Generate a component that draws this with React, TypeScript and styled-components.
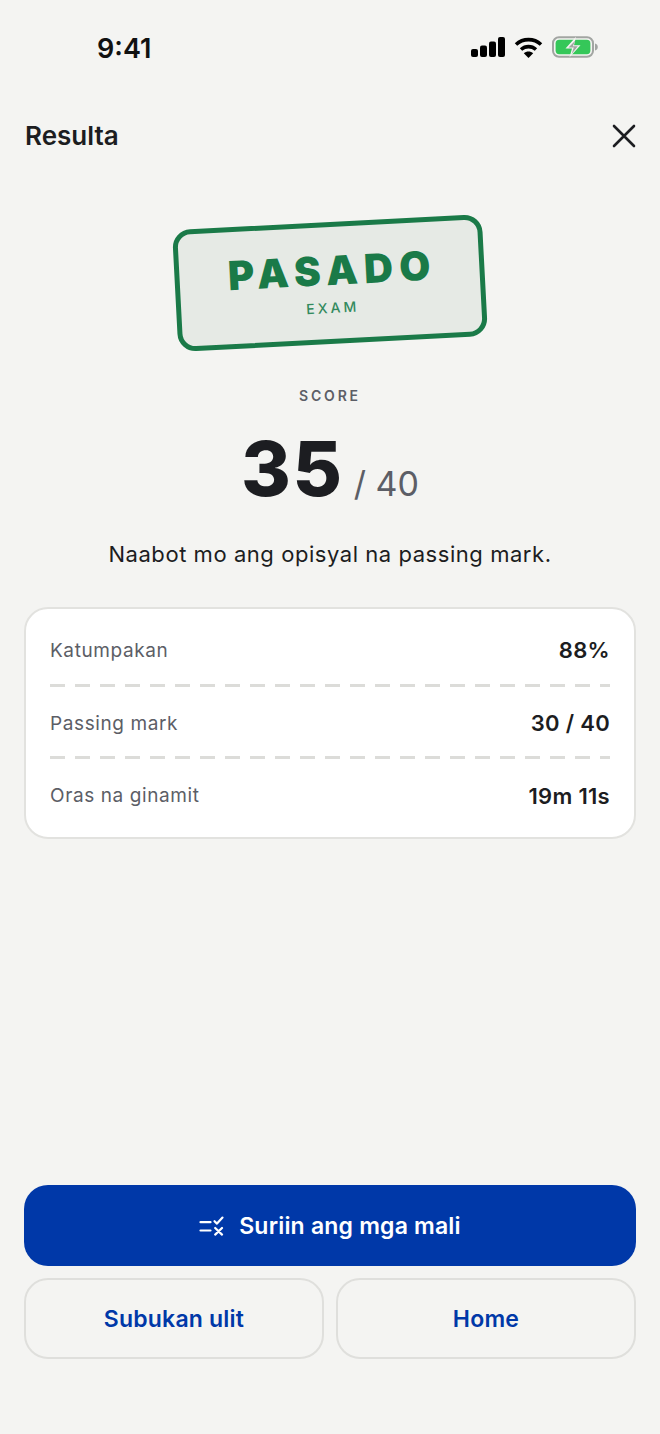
import React from "react";
import styled, { createGlobalStyle } from "styled-components";

const Global = createGlobalStyle`
  html, body { margin: 0; padding: 0; background: #f4f4f2; }
  * { box-sizing: border-box; }
`;

const Screen = styled.div`
  width: 660px;
  height: 1434px;
  background: #f4f4f2;
  font-family: Inter, "Liberation Sans", sans-serif;
  color: #1c1d21;
  display: flex;
  flex-direction: column;
`;

const StatusBar = styled.div`
  height: 96px;
  padding: 32px 62px 0 97px;
  display: flex;
  justify-content: space-between;
  align-items: flex-start;
`;

const Time = styled.div`
  font-size: 27px;
  font-weight: 600;
  line-height: 33px;
  color: #111;
`;

const StatusIcons = styled.div`
  display: flex;
  align-items: center;
  gap: 9px;
  margin-top: 4px;
`;

const Header = styled.div`
  height: 80px;
  padding: 0 24px 0 25px;
  display: flex;
  justify-content: space-between;
  align-items: center;
`;

const Title = styled.h1`
  margin: 0;
  font-size: 26px;
  font-weight: 600;
  line-height: 32px;
  color: #1c1d21;
`;

const CloseButton = styled.button`
  width: 24px;
  height: 24px;
  padding: 0;
  border: 0;
  background: none;
  display: flex;
`;

const StampWrap = styled.div`
  display: flex;
  justify-content: center;
  padding-top: 46px;
`;

const Stamp = styled.div`
  width: 310px;
  height: 122px;
  border: 5px solid #1a7a48;
  border-radius: 18px;
  background: #e6eae5;
  transform: rotate(-3deg);
  display: flex;
  flex-direction: column;
  align-items: center;
  color: #1a7a48;
`;

const StampWord = styled.div`
  font-size: 40px;
  font-weight: 900;
  letter-spacing: 6.4px;
  line-height: 48px;
  margin-top: 20px;
  margin-right: -6px;
`;

const StampSub = styled.div`
  font-size: 14px;
  font-weight: 500;
  letter-spacing: 3px;
  line-height: 18px;
  margin-top: 4px;
  margin-right: -3px;
  color: #338a5e;
`;

const ScoreLabel = styled.div`
  margin-top: 43px;
  text-align: center;
  font-size: 14px;
  font-weight: 600;
  letter-spacing: 2.8px;
  line-height: 18px;
  color: #5c5e66;
`;

const ScoreRow = styled.div`
  margin-top: 19px;
  display: flex;
  justify-content: center;
  align-items: baseline;
  gap: 10px;
  height: 88px;
`;

const ScoreValue = styled.span`
  font-size: 76px;
  font-weight: 800;
  line-height: 88px;
  letter-spacing: 1.6px;
  color: #1c1d21;
`;

const ScoreTotal = styled.span`
  font-size: 34px;
  font-weight: 400;
  line-height: 40px;
  color: #5c5e66;
`;

const Message = styled.p`
  margin: 28px 0 0;
  text-align: center;
  font-size: 22px;
  font-weight: 400;
  letter-spacing: 0.55px;
  line-height: 28px;
  color: #1c1d21;
`;

const Card = styled.div`
  margin: 39px 24px 0;
  height: 232px;
  background: #fff;
  border: 2px solid #e2e2df;
  border-radius: 24px;
  padding: 5px 24px;
  display: flex;
  flex-direction: column;
`;

const Row = styled.div<{ $divider?: boolean }>`
  flex: 1;
  display: flex;
  justify-content: space-between;
  align-items: center;
  background-image: ${(p) =>
    p.$divider
      ? "repeating-linear-gradient(90deg, #dcdcd9 0 15px, transparent 15px 25px)"
      : "none"};
  background-size: 100% 3px;
  background-position: bottom;
  background-repeat: no-repeat;
`;

const RowLabel = styled.span`
  font-size: 19px;
  letter-spacing: 0.6px;
  color: #5c5e66;
`;

const RowValue = styled.span`
  font-size: 22px;
  font-weight: 600;
  letter-spacing: 0.3px;
  color: #1c1d21;
`;

const Actions = styled.div`
  margin: auto 24px 75px;
  display: flex;
  flex-direction: column;
  gap: 12px;
`;

const PrimaryButton = styled.button`
  height: 81px;
  border: 0;
  border-radius: 24px;
  background: #0038a8;
  color: #fff;
  font: 600 23px Inter, "Liberation Sans", sans-serif;
  letter-spacing: 0.2px;
  display: flex;
  justify-content: center;
  align-items: center;
  gap: 14px;
`;

const SecondaryRow = styled.div`
  display: grid;
  grid-template-columns: 1fr 1fr;
  gap: 12px;
`;

const SecondaryButton = styled.button`
  height: 81px;
  border: 2px solid #dfdfdc;
  border-radius: 24px;
  background: transparent;
  color: #0038a8;
  font: 600 23px Inter, "Liberation Sans", sans-serif;
  letter-spacing: 0.2px;
`;

const Signal = () => (
  <svg width="34" height="20" viewBox="0 0 34 20" fill="#000">
    <rect x="0" y="12" width="7" height="8" rx="2" />
    <rect x="9" y="8.5" width="7" height="11.5" rx="2" />
    <rect x="18" y="4.5" width="7" height="15.5" rx="2" />
    <rect x="27" y="0" width="7" height="20" rx="2" />
  </svg>
);

const Wifi = () => (
  <svg width="29" height="21" viewBox="0 0 29 21" fill="none" stroke="#000" strokeWidth="3.6">
    <path d="M2 7.5C9 1 20 1 27 7.5" />
    <path d="M7 12.5C11.5 8.6 17.5 8.6 22 12.5" />
    <path d="M14.5 21L9.8 16.2C12.5 14 16.5 14 19.2 16.2Z" fill="#000" stroke="none" />
  </svg>
);

const Battery = () => (
  <svg width="46" height="22" viewBox="0 0 46 22" fill="none">
    <rect x="1" y="1.2" width="40" height="19.6" rx="6" stroke="#a2a5a2" strokeWidth="2" />
    <rect x="3.6" y="3.8" width="34.8" height="14.4" rx="3.6" fill="#35c759" />
    <path d="M43 7.5c1.8.5 2.8 1.8 2.8 3.5s-1 3-2.8 3.5z" fill="#a2a5a2" />
    <path d="M24 0.8L13.5 12.6H20L17.5 21.2L28.5 9.2H22Z" fill="#f4f4f2" />
    <path d="M23.4 4.5L16.5 11.6H21.8L19.6 18L25.8 10.3H20.8Z" fill="#a2a5a2" />
  </svg>
);

const CloseIcon = () => (
  <svg width="24" height="24" viewBox="0 0 24 24" fill="none" stroke="#1c1d21" strokeWidth="2.6" strokeLinecap="round">
    <path d="M2 2L22 22M22 2L2 22" />
  </svg>
);

const ReviewIcon = () => (
  <svg width="26" height="20" viewBox="0 0 26 20" fill="none" stroke="#fff" strokeWidth="2.2" strokeLinecap="round" strokeLinejoin="round">
    <path d="M1.5 6.2H11.5M1.5 14.5H11.5" />
    <path d="M15.5 5.2L18 7.6L23.5 1.6" />
    <path d="M16.2 12L23 18.6M23 12L16.2 18.6" />
  </svg>
);

export default function App() {
  return (
    <Screen>
      <Global />
      <StatusBar>
        <Time>9:41</Time>
        <StatusIcons>
          <Signal />
          <Wifi />
          <Battery />
        </StatusIcons>
      </StatusBar>
      <Header>
        <Title>Resulta</Title>
        <CloseButton aria-label="Isara">
          <CloseIcon />
        </CloseButton>
      </Header>
      <StampWrap>
        <Stamp>
          <StampWord>PASADO</StampWord>
          <StampSub>EXAM</StampSub>
        </Stamp>
      </StampWrap>
      <ScoreLabel>SCORE</ScoreLabel>
      <ScoreRow>
        <ScoreValue>35</ScoreValue>
        <ScoreTotal>/ 40</ScoreTotal>
      </ScoreRow>
      <Message>Naabot mo ang opisyal na passing mark.</Message>
      <Card>
        <Row $divider>
          <RowLabel>Katumpakan</RowLabel>
          <RowValue>88%</RowValue>
        </Row>
        <Row $divider>
          <RowLabel>Passing mark</RowLabel>
          <RowValue>30 / 40</RowValue>
        </Row>
        <Row>
          <RowLabel>Oras na ginamit</RowLabel>
          <RowValue>19m 11s</RowValue>
        </Row>
      </Card>
      <Actions>
        <PrimaryButton>
          <ReviewIcon />
          Suriin ang mga mali
        </PrimaryButton>
        <SecondaryRow>
          <SecondaryButton>Subukan ulit</SecondaryButton>
          <SecondaryButton>Home</SecondaryButton>
        </SecondaryRow>
      </Actions>
    </Screen>
  );
}
